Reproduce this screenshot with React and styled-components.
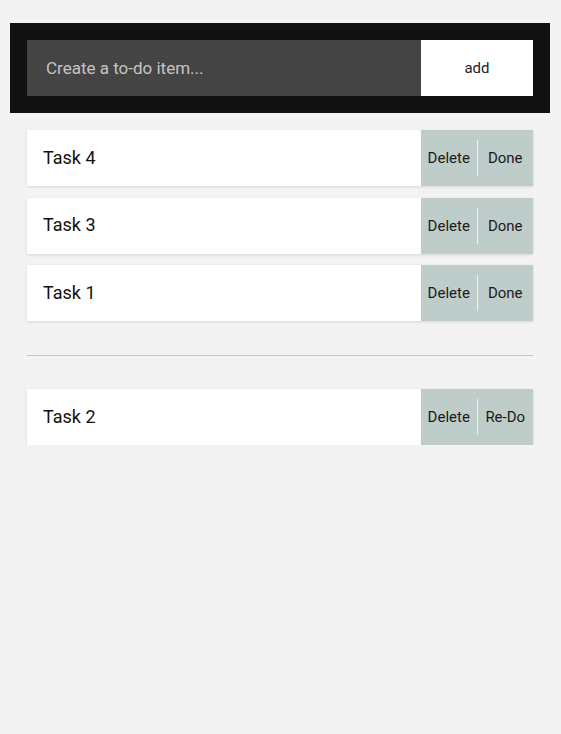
import React, { useState } from "react";
import styled, { createGlobalStyle } from "styled-components";

const GlobalStyle = createGlobalStyle`
  body {
    margin: 0;
    background: #f3f3f3;
    font-family: Roboto, "Liberation Sans", sans-serif;
  }
`;

const Page = styled.div`
  width: 540px;
  margin: 23px 0 0 10px;
`;

const Header = styled.header`
  display: flex;
  background: #111111;
  padding: 17px;
`;

const Input = styled.input`
  flex: 1;
  height: 56px;
  box-sizing: border-box;
  border: none;
  outline: none;
  background: #444444;
  color: #eee;
  padding: 0 19px;
  font-family: inherit;
  font-size: 17px;

  &::placeholder {
    color: #c4c4c4;
  }
`;

const AddButton = styled.button`
  width: 112px;
  height: 56px;
  border: none;
  background: #ffffff;
  color: #222;
  font-family: inherit;
  font-size: 15px;
  cursor: pointer;
`;

const List = styled.ul`
  list-style: none;
  margin: 0;
  padding: 17px 17px 0;
  display: flex;
  flex-direction: column;
  gap: 11.5px;
`;

const Item = styled.li`
  display: flex;
  height: 56px;
  background: #ffffff;
  box-shadow: 0 1px 3px rgba(0, 0, 0, 0.12);
`;

const Label = styled.span`
  flex: 1;
  display: flex;
  align-items: center;
  padding: 0 0 2px 16px;
  font-size: 18px;
  color: #111;
`;

const Actions = styled.div`
  display: flex;
  align-items: center;
  width: 112px;
  background: #bfcdca;
`;

const ActionButton = styled.button`
  flex: 1;
  height: 100%;
  border: none;
  background: transparent;
  padding: 0;
  font-family: inherit;
  font-size: 15px;
  color: #1a1a1a;
  cursor: pointer;
`;

const Divider = styled.span`
  width: 1px;
  height: 36px;
  background: #eef2f1;
`;

const Rule = styled.hr`
  margin: 34px 17px 33px;
  border: none;
  border-top: 1px solid #c8c8c8;
`;

const DoneList = styled(List)`
  padding-top: 0;
`;

function Task({ name, action }) {
  return (
    <Item>
      <Label>{name}</Label>
      <Actions>
        <ActionButton>Delete</ActionButton>
        <Divider />
        <ActionButton>{action}</ActionButton>
      </Actions>
    </Item>
  );
}

export default function App() {
  const [todo] = useState(["Task 4", "Task 3", "Task 1"]);
  const [done] = useState(["Task 2"]);

  return (
    <Page>
      <GlobalStyle />
      <Header>
        <Input placeholder="Create a to-do item..." />
        <AddButton>add</AddButton>
      </Header>
      <List>
        {todo.map(t => (
          <Task key={t} name={t} action="Done" />
        ))}
      </List>
      <Rule />
      <DoneList>
        {done.map(t => (
          <Task key={t} name={t} action="Re-Do" />
        ))}
      </DoneList>
    </Page>
  );
}
